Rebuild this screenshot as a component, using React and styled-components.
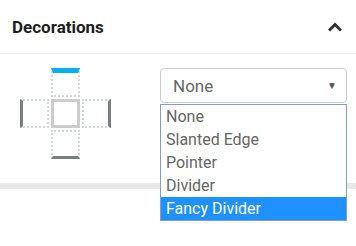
import React, { useState } from 'react';
import styled, { createGlobalStyle } from 'styled-components';

const Global = createGlobalStyle`
    body{
        margin:0;
        background:#fff;
        font-family:Roboto, "Liberation Sans", sans-serif;
    }
`

const Panel = styled.div`
    width:356px;
    height:246px;
    overflow:hidden;
`

const Header = styled.div`
    height:54px;
    box-sizing:border-box;
    display:flex;
    align-items:center;
    justify-content:space-between;
    padding:0 13px 0 12px;
    border-bottom:1px solid #eeeeee;
    h3{
        margin:0;
        font-size:17px;
        font-weight:700;
        color:#1e1e1e;
    }
`

const Body = styled.div`
    display:flex;
    align-items:flex-start;
    padding:14px 0 0 20px;
    height:101px;
`

const Picker = styled.div`
    display:grid;
    grid-template-columns:29px 29px 29px;
    grid-template-rows:29px 29px 29px;
    gap:2px;
`

const barSide = {
    top:'border-top',
    bottom:'border-bottom',
    left:'border-left',
    right:'border-right',
};

const Side = styled.div`
    box-sizing:border-box;
    border:2px dotted #d3d8dd;
    ${(props) => `${barSide[props.side]}:${props.thick}px solid ${props.color};`}
    grid-column:${(props) => props.col};
    grid-row:${(props) => props.row};
`

const Center = styled.div`
    box-sizing:border-box;
    border:3px solid #cccccc;
    grid-column:2;
    grid-row:2;
`

const SelectWrap = styled.div`
    position:relative;
    margin-left:49px;
    width:187px;
`

const SelectBox = styled.div`
    box-sizing:border-box;
    height:35px;
    border:1px solid #cccccc;
    border-radius:4px;
    display:flex;
    align-items:center;
    justify-content:space-between;
    padding:0 9px 0 12px;
    color:#666;
    font-size:17px;
    span{
        font-size:10px;
        color:#555;
    }
`

const Options = styled.div`
    position:absolute;
    top:36px;
    left:0;
    width:187px;
    box-sizing:border-box;
    border:1px solid #7f9dd0;
    background:#fff;
    z-index:2;
`

const Option = styled.div`
    height:23px;
    line-height:23px;
    padding-left:5px;
    font-size:16px;
    color:${(props) => (props.active ? '#fff' : '#666')};
    background:${(props) => (props.active ? '#1e90ff' : 'transparent')};
`

const Rule = styled.div`
    height:6px;
    background:#e9e9e9;
    margin-top:14px;
`

const options = ['None', 'Slanted Edge', 'Pointer', 'Divider', 'Fancy Divider'];

const App = () => {
    const [selected] = useState('Fancy Divider');
    return (
        <Panel>
            <Global />
            <Header>
                <h3>Decorations</h3>
                <svg width="16" height="10" viewBox="0 0 16 10">
                    <path d="M2 8.5 L8 2.5 L14 8.5" fill="none" stroke="#333" strokeWidth="3" />
                </svg>
            </Header>
            <Body>
                <Picker>
                    <Side side="top" thick={5} color="#00b0f0" col={2} row={1} />
                    <Side side="left" thick={3} color="#787e84" col={1} row={2} />
                    <Center />
                    <Side side="right" thick={3} color="#787e84" col={3} row={2} />
                    <Side side="bottom" thick={3} color="#787e84" col={2} row={3} />
                </Picker>
                <SelectWrap>
                    <SelectBox>None<span>▼</span></SelectBox>
                    <Options>
                        {options.map((item) => (
                            <Option key={item} active={item === selected}>{item}</Option>
                        ))}
                    </Options>
                </SelectWrap>
            </Body>
            <Rule />
        </Panel>
    )
}

export default App
